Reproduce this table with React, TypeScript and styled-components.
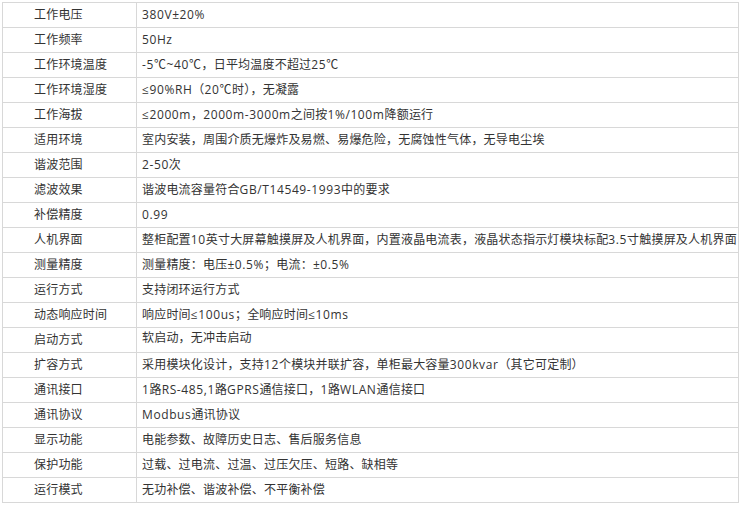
import styled, { createGlobalStyle } from 'styled-components';

const GlobalStyle = createGlobalStyle`
  html, body {
    margin: 0;
    padding: 0;
    background: #fff;
  }
  body {
    font-family: "Open Sans", "Noto Sans CJK SC", sans-serif;
    color: #333;
  }
`;

const specs: [string, string][] = [
  ['工作电压', '380V±20%'],
  ['工作频率', '50Hz'],
  ['工作环境温度', '-5℃~40℃，日平均温度不超过25℃'],
  ['工作环境湿度', '≤90%RH（20℃时），无凝露'],
  ['工作海拔', '≤2000m，2000m-3000m之间按1%/100m降额运行'],
  ['适用环境', '室内安装，周围介质无爆炸及易燃、易爆危险，无腐蚀性气体，无导电尘埃'],
  ['谐波范围', '2-50次'],
  ['滤波效果', '谐波电流容量符合GB/T14549-1993中的要求'],
  ['补偿精度', '0.99'],
  ['人机界面', '整柜配置10英寸大屏幕触摸屏及人机界面，内置液晶电流表，液晶状态指示灯模块标配3.5寸触摸屏及人机界面'],
  ['测量精度', '测量精度：电压±0.5%；电流：±0.5%'],
  ['运行方式', '支持闭环运行方式'],
  ['动态响应时间', '响应时间≤100us；全响应时间≤10ms'],
  ['启动方式', '软启动，无冲击启动'],
  ['扩容方式', '采用模块化设计，支持12个模块并联扩容，单柜最大容量300kvar（其它可定制）'],
  ['通讯接口', '1路RS-485,1路GPRS通信接口，1路WLAN通信接口'],
  ['通讯协议', 'Modbus通讯协议'],
  ['显示功能', '电能参数、故障历史日志、售后服务信息'],
  ['保护功能', '过载、过电流、过温、过压欠压、短路、缺相等'],
  ['运行模式', '无功补偿、谐波补偿、不平衡补偿'],
];

const Page = styled.div`
  padding: 2px 0 0 2px;
`;

const SpecTable = styled.table`
  width: 737px;
  border-collapse: collapse;
  table-layout: fixed;
  font-size: 12px;
  line-height: 16px;
`;

const Row = styled.tr``;

const Cell = styled.td<{ $label?: boolean; $raised?: boolean }>`
  height: 25px;
  padding: 0 0 ${(p) => (p.$raised ? '5px' : '0')} ${(p) => (p.$label ? '31px' : '5px')};
  border: 1px solid #d8d8d8;
  box-sizing: border-box;
  white-space: nowrap;
  vertical-align: middle;
  letter-spacing: 0.2px;
  color: #333;
  overflow: hidden;
`;

// latin runs are set a little wider than the CJK text around them
const Latin = styled.span`
  letter-spacing: 0.6px;
`;

const splitRuns = (text: string) =>
  text.split(/([\u0020-\u007e±≤℃]+)/).filter(Boolean);

const isLatin = (run: string) => /^[\u0020-\u007e±≤℃]+$/.test(run);

const Value = ({ text }: { text: string }) => (
  <>
    {splitRuns(text).map((run, i) => (isLatin(run) ? <Latin key={i}>{run}</Latin> : run))}
  </>
);

export default function App() {
  return (
    <Page>
      <GlobalStyle />
      <SpecTable>
        <colgroup>
          <col style={{ width: 134 }} />
          <col />
        </colgroup>
        <tbody>
          {specs.map(([label, value]) => (
            <Row key={label}>
              <Cell $label>{label}</Cell>
              <Cell $raised={label === '启动方式'}>
                <Value text={value} />
              </Cell>
            </Row>
          ))}
        </tbody>
      </SpecTable>
    </Page>
  );
}
